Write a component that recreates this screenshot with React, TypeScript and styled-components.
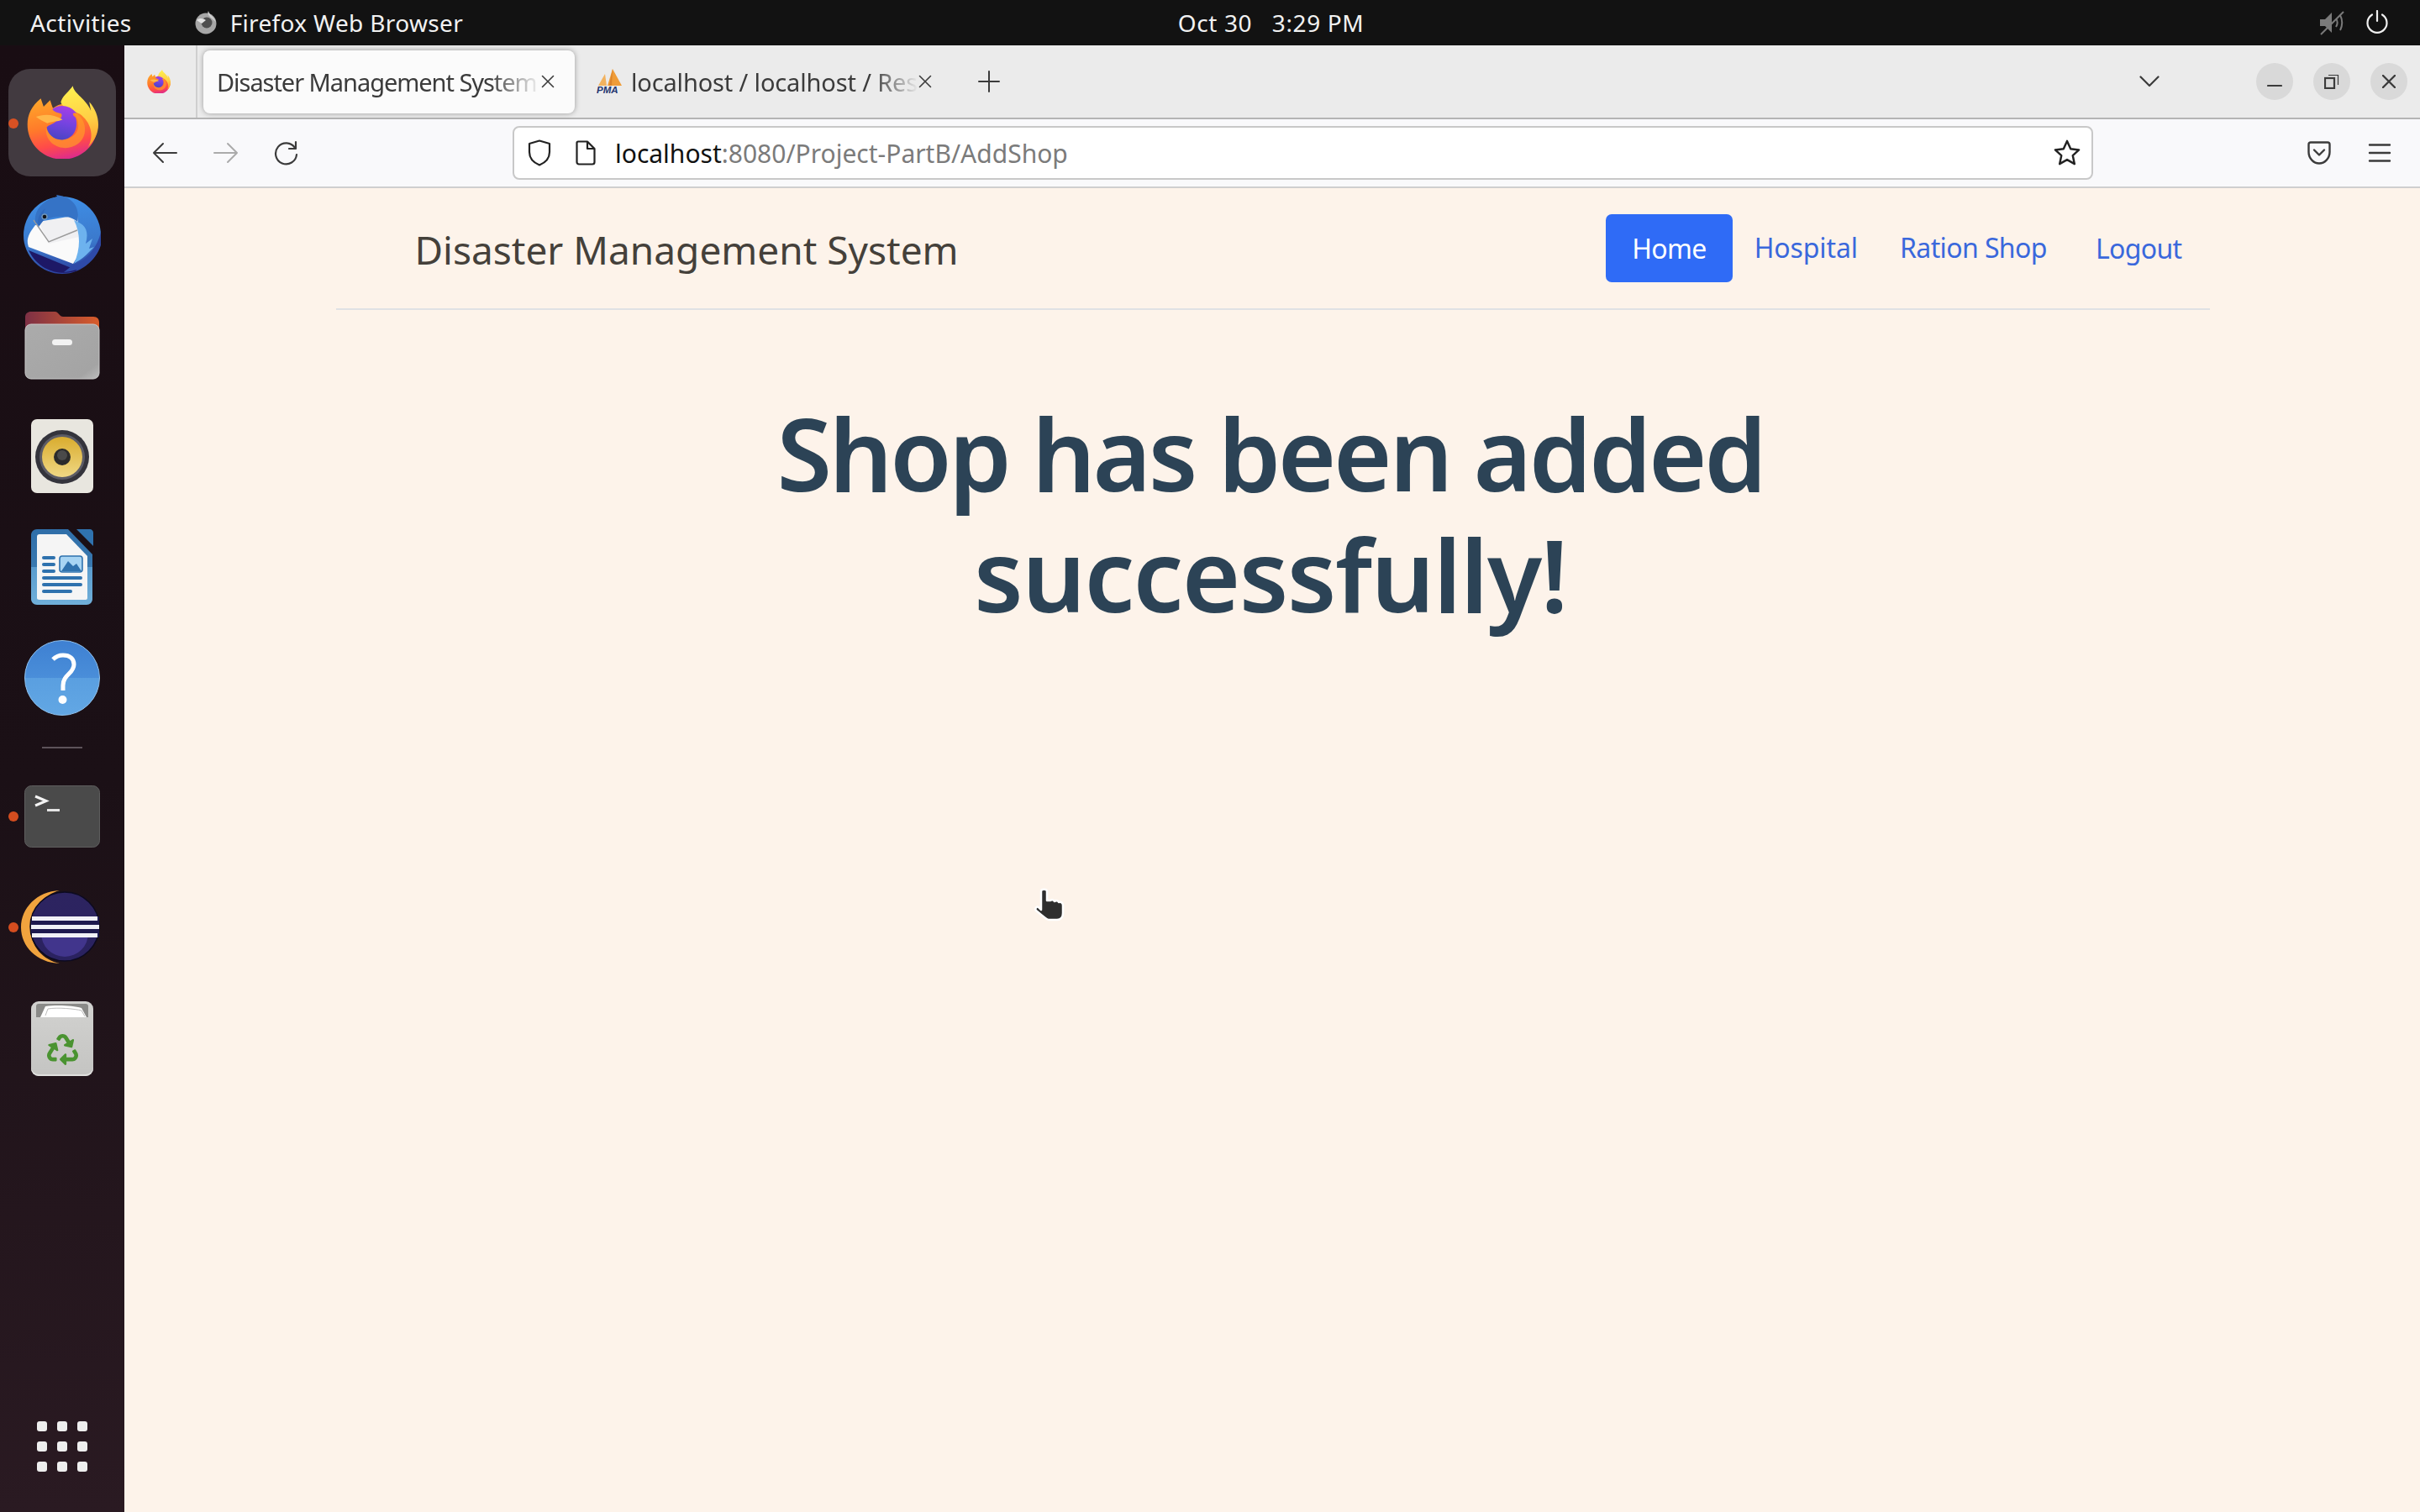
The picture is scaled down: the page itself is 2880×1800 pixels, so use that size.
import React from "react";
import styled, { createGlobalStyle } from "styled-components";
import { FaRecycle } from "react-icons/fa";

const Global = createGlobalStyle`
  html, body { margin: 0; padding: 0; width: 2880px; height: 1800px; overflow: hidden; background: #121212; }
  #root { width: 2880px; height: 1800px; }
  * { box-sizing: border-box; }
`;
const UI = `"Noto Sans", "Open Sans", sans-serif`;

const Screen = styled.div`
  position: relative; width: 2880px; height: 1800px; display: flex; flex-direction: column;
  font-family: ${UI}; overflow: hidden;
`;
const TopBar = styled.header`
  height: 54px; flex: none; background: #121212; color: #f2f2f2; display: grid;
  grid-template-columns: 1fr auto 1fr; align-items: center; padding: 0 37px 0 36px; font-size: 28px;
`;
const TopLeft = styled.div`display: flex; align-items: center;`;
const TopRight = styled.div`display: flex; align-items: center; justify-content: flex-end; gap: 25px;`;
const Activities = styled.span`letter-spacing: 0.4px; margin-right: 74px;`;
const AppName = styled.span`letter-spacing: 0.35px; margin-left: 15px;`;
const Clock = styled.span`letter-spacing: 0.6px; white-space: pre; transform: translateX(73px);`;
const Desktop = styled.div`flex: 1; display: flex; min-height: 0;`;
const Dock = styled.nav`
  width: 148px; flex: none; display: flex; flex-direction: column; align-items: center;
  background: linear-gradient(180deg, #190d13 0%, #1b1016 50%, #2a1a22 100%); padding-top: 27px;
`;
const Slot = styled.div<{ $active?: boolean }>`
  position: relative; width: 128px; height: 132px; flex: none; display: flex; align-items: center; justify-content: center;
  ${p => p.$active ? `&::before{content:"";position:absolute;left:0;right:0;top:1px;bottom:3px;background:#423a40;border-radius:26px;} & > svg{margin-top:-3px;}` : ""}
  & > svg { position: relative; }
`;
const RunDot = styled.span`
  position: absolute; left: 0px; top: 60px; width: 12px; height: 12px; border-radius: 50%; background: #e95420;
  opacity: .9;
`;
const DockSep = styled.div`
  width: 48px; height: 2px; background: #5d535a; margin: 16px 0 15px; flex: none;
`;
const AppGrid = styled.div`
  margin-top: auto; margin-bottom: 48px; display: grid; grid-template-columns: repeat(3, 12px); gap: 12px;
`;
const GridDot = styled.span`width: 12px; height: 12px; border-radius: 3px; background: #eeeeee;`;
const TrashTile = styled.div`
  position: relative; width: 74px; height: 89px; border-radius: 9px; overflow: hidden; display: flex; align-items: center; justify-content: center; padding-top: 26px;
  background: linear-gradient(180deg, #d2d2d0, #c4c4c2); color: #4a9331; box-shadow: inset 0 -2px 0 #e0e0de;
`;
const TrashMouth = styled.svg`position: absolute; left: 0; top: 0;`;

const Browser = styled.main`flex: 1; display: flex; flex-direction: column; min-width: 0;`;
const TabStrip = styled.div`
  height: 88px; flex: none; background: #ebebeb; border-bottom: 2px solid #b4b4b4; display: flex; align-items: center; color: #3b3b3b;
`;
const PinnedTab = styled.div`
  width: 87px; height: 100%; flex: none; display: flex; align-items: center; justify-content: center; border-right: 2px solid #cfcfcf;
  padding-right: 3px;
`;
const Tab = styled.div<{ $active?: boolean }>`
  width: 442px; height: 75px; flex: none; display: flex; align-items: center; margin-left: 7px; padding: 0 24px 0 ${p => p.$active ? 16 : 19}px; font-size: 29px; border-radius: 8px;
  ${p => p.$active ? `background:#fbfbfb; box-shadow: 0 0 6px rgba(0,0,0,.35);` : ""}
`;
const TabTitle = styled.span<{ $ls: number }>`
  flex: 1; min-width: 0; white-space: nowrap; overflow: hidden; letter-spacing: ${p => p.$ls}px;
  -webkit-mask-image: linear-gradient(90deg, #000 84%, transparent 100%); mask-image: linear-gradient(90deg, #000 84%, transparent 100%);
`;
const TabIconGap = styled.span`width: 9px; flex: none;`;
const NewTab = styled.div`margin-left: 31px; display: flex;`;
const StripEnd = styled.div`margin-left: auto; display: flex; align-items: center; padding-right: 15px;`;
const AllTabs = styled.div`display: flex; margin-right: 91px;`;
const WinButton = styled.div`
  width: 44px; height: 44px; border-radius: 50%; background: #d9d9d9; display: flex; align-items: center; justify-content: center; margin-left: 24px;
`;
const NavBar = styled.div`
  height: 82px; flex: none; background: #f9f9fb; border-bottom: 2px solid #cfcfcf; display: flex; align-items: center; padding-left: 33px;
`;
const NavIcon = styled.div<{ $w: number }>`width: ${p => p.$w}px; flex: none; display: flex;`;
const UrlBar = styled.div`
  width: 1881px; height: 64px; flex: none; background: #fff; border: 2px solid #c8c8c8; border-radius: 8px; display: flex; align-items: center;
  padding: 0 13px 0 16px; font-size: 30px; color: #7b7b7b; letter-spacing: 0;
`;
const UrlHost = styled.span`color: #111;`;
const UrlText = styled.span`margin-left: 23px; flex: 1;`;
const PageIcon = styled.span`display: flex; margin-left: 29px;`;
const NavEnd = styled.div`display: flex; align-items: center; margin-left: 255px; gap: 44px;`;

const Page = styled.section`flex: 1; background: #fdf3ea; display: flex; flex-direction: column; align-items: center; min-height: 0; padding-left: 1px;`;
const SiteHeader = styled.div`
  width: 2230px; height: 145px; flex: none; display: flex; align-items: center; justify-content: space-between; border-bottom: 2px solid #e0e1e4; padding: 0 33px 0 94px;
`;
const Brand = styled.span`font-size: 46px; color: #44403a; letter-spacing: 0; line-height: 1; padding-top: 2px;`;
const Links = styled.div`display: flex; align-items: center;`;
const NavLink = styled.a<{ $active?: boolean; $gap: number; $ls: number; $lift?: boolean }>`
  height: 81px; display: flex; align-items: center; border-radius: 7px; font-size: 32px; letter-spacing: ${p => p.$ls}px; margin-left: ${p => p.$gap}px;
  padding: 0 ${p => p.$active ? 31 : 0}px ${p => p.$lift ? 3 : 0}px;
  background: ${p => p.$active ? "#2f6bf6" : "transparent"}; color: ${p => p.$active ? "#fff" : "#3a68dc"};
`;
const Heading = styled.h1`
  margin: 98px 0 0; width: 1400px; padding-right: 5px; text-align: center; font-size: 119px; line-height: 144px; font-weight: 600; color: #2c4356;
`;
const HeadLine = styled.span<{ $ls: number }>`display: block; letter-spacing: ${p => p.$ls}px;`;
const Pointer = styled.svg`position: absolute; left: 1229px; top: 1057px;`;

const Firefox = ({ size }: { size: number }) => (
  <svg width={size} height={size * 260 / 252} viewBox="36 33 252 260">
    <defs>
      <linearGradient id="ffBody" x1=".3" y1="0" x2=".55" y2="1">
        <stop offset="0" stopColor="#ffa52a" /><stop offset=".45" stopColor="#ff7a2a" />
        <stop offset=".75" stopColor="#ff4a4a" /><stop offset="1" stopColor="#dd2a8e" />
      </linearGradient>
      <linearGradient id="ffFlame" x1=".5" y1="0" x2=".6" y2="1">
        <stop offset="0" stopColor="#fff04f" /><stop offset=".55" stopColor="#ffcf45" /><stop offset="1" stopColor="#ff9a2a" />
      </linearGradient>
      <linearGradient id="ffBall" x1=".6" y1="0" x2=".4" y2="1">
        <stop offset="0" stopColor="#a63fe6" /><stop offset=".5" stopColor="#7543e0" /><stop offset="1" stopColor="#4a44c4" />
      </linearGradient>
    </defs>
    <path fill="url(#ffBody)" d="M38 170C38 135 52 105 85 78L95 107L118 84C122 95 124 104 128 112C150 96 178 90 200 110C240 130 286 130 286 170C286 238 232 293 162 293C92 293 38 238 38 170Z" />
    <path fill="url(#ffFlame)" d="M198 34C202 62 246 80 262 122L256 90C276 112 288 140 288 170C288 200 276 226 250 252C276 212 262 160 222 132C194 120 146 104 158 84C166 66 186 52 198 34Z" />
    <path fill="#ff9a2a" opacity=".7" d="M196 122C226 136 246 164 240 200C234 236 196 258 160 252C126 246 100 220 104 182C118 220 174 236 206 204C226 184 218 146 196 122Z" />
    <path fill="url(#ffBall)" d="M160 104C178 104 196 112 212 130C196 128 194 134 208 146C220 182 200 222 162 224C132 226 108 204 106 180C112 170 134 168 146 152C160 146 160 140 158 132C140 128 128 122 126 116C136 108 148 104 160 104Z" />
    <path fill="#ffb84a" d="M68 143C92 133 126 131 162 152C150 160 122 158 108 166C94 160 80 152 68 143Z" />
  </svg>
);

const Thunderbird = () => (
  <svg width="96" height="94" viewBox="0 0 96 94">
    <defs>
      <linearGradient id="tbBlue" x1=".5" y1="0" x2=".6" y2="1"><stop offset="0" stopColor="#3f8fe6" /><stop offset=".6" stopColor="#3b79cc" /><stop offset="1" stopColor="#2b3f9e" /></linearGradient>
    </defs>
    <circle cx="48" cy="48" r="46" fill="url(#tbBlue)" />
    <path fill="#1d1866" d="M8 66L66 90C50 96 22 94 8 66Z" />
    <path fill="#2e4aa8" d="M60 84C78 78 90 62 94 44L94 60C88 78 74 90 50 92Z" />
    <path fill="#fafafa" d="M16 36L62 36L68 36C72 42 70 60 66 74L61 82L8 62C4 52 10 44 16 36Z" />
    <path fill="#f0f0f2" d="M20 32L66 24L68 50L32 58Z" />
    <path fill="none" stroke="#9a9a9a" strokeWidth="1.4" d="M14 30L32 56L66 42" />
    <path fill="#3573c6" d="M16 32C14 18 26 6 42 2L41 0C58 2 70 12 66 32C58 24 42 24 26 30L20 36Z" />
    <path fill="#6db2ee" d="M66 32C76 36 80 44 76 58L84 52L80 64L86 62L76 72C70 78 64 80 62 82C70 64 70 46 62 30Z" />
    <path fill="#2f69bd" d="M20 38C18 34 18 24 28 16C24 24 24 28 26 30Z" />
    <circle cx="27" cy="26" r="2.2" fill="#141414" /><circle cx="27" cy="26" r="3.2" fill="none" stroke="#8da3ad" strokeWidth="1" />
  </svg>
);

const Files = () => (
  <svg width="90" height="82" viewBox="0 0 90 82">
    <defs>
      <linearGradient id="fTab" x1="0" y1="0" x2="1" y2="0"><stop offset="0" stopColor="#7d3045" /><stop offset="1" stopColor="#d95d2b" /></linearGradient>
      <linearGradient id="fBody" x1="0" y1="0" x2="1" y2="1"><stop offset="0" stopColor="#ababab" /><stop offset=".85" stopColor="#a4a4a4" /><stop offset="1" stopColor="#bdbdbd" /></linearGradient>
    </defs>
    <path fill="url(#fTab)" d="M1 30V8C1 3 4 1 8 1H36C39 1 40 3 42 5C44 7 45 7 48 7H82C87 7 89 10 89 14V30Z" />
    <rect x="1" y="16" width="88" height="65" rx="7" fill="url(#fBody)" stroke="#c9c9c9" strokeWidth="1" />
    <rect x="33" y="34" width="24" height="7" rx="3.5" fill="#f2f2f2" />
  </svg>
);

const Rhythmbox = () => (
  <svg width="74" height="88" viewBox="0 0 74 88">
    <defs><linearGradient id="rbCone" x1="0" y1="0" x2="0" y2="1"><stop offset="0" stopColor="#d9ac2e" /><stop offset="1" stopColor="#f0d884" /></linearGradient></defs>
    <rect x="0" y="0" width="74" height="88" rx="7" fill="#e8e6df" />
    <circle cx="37" cy="45" r="32" fill="#34343c" /><circle cx="37" cy="45" r="27" fill="#5c5c66" />
    <circle cx="37" cy="45" r="24" fill="url(#rbCone)" /><circle cx="37" cy="45" r="10" fill="#2b2b2b" /><circle cx="37" cy="43" r="6" fill="#4a4a4a" />
  </svg>
);

const Writer = () => (
  <svg width="74" height="90" viewBox="0 0 74 90">
    <defs><linearGradient id="wSide" x1="0" y1="0" x2="0" y2="1"><stop offset="0" stopColor="#2f6ea8" /><stop offset=".5" stopColor="#3979b0" /><stop offset=".5" stopColor="#5a9cce" /><stop offset="1" stopColor="#70afd9" /></linearGradient></defs>
    <path fill="url(#wSide)" d="M7 0H44L73 30V83C73 87 70 90 66 90H7C3 90 0 87 0 83V7C0 3 3 0 7 0Z" />
    <path fill="#f5f5f5" d="M10 6H42L67 32V82C67 83 66 84 65 84H10C8 84 7 83 7 82V9C7 7 8 6 10 6Z" />
    <path fill="#2f72ae" d="M54 0H70C72 0 74 2 74 4V20Z" />
    <g fill="#2f72ae">
      <rect x="13" y="32" width="16" height="4" rx="2" /><rect x="13" y="40" width="16" height="4" rx="2" /><rect x="13" y="48" width="16" height="4" rx="2" />
      <rect x="13" y="56" width="48" height="4" rx="2" /><rect x="13" y="64" width="48" height="4" rx="2" /><rect x="13" y="72" width="36" height="4" rx="2" />
    </g>
    <rect x="34" y="32" width="27" height="19" rx="3" fill="#a7d4f3" stroke="#2f72ae" strokeWidth="1.6" />
    <path fill="#2f72ae" d="M36 50L44 38L50 44L54 41L60 50Z" />
  </svg>
);

const Help = () => (
  <svg width="90" height="90" viewBox="0 0 90 90">
    <defs><linearGradient id="hBlue" x1="0" y1="0" x2="0" y2="1"><stop offset="0" stopColor="#3e80d2" /><stop offset=".5" stopColor="#4a8ed9" /><stop offset=".5" stopColor="#5a9fe0" /><stop offset="1" stopColor="#62a7e4" /></linearGradient></defs>
    <circle cx="45" cy="45" r="44.5" fill="url(#hBlue)" stroke="#8fc0ec" strokeWidth="1" />
    <path fill="none" stroke="#fff" strokeWidth="5" d="M34 23C38 19 42 18 46 18C54 18 59 22 59 29C59 40 46 41 46 54V60" />
    <circle cx="45.5" cy="71" r="5" fill="#fff" />
  </svg>
);

const Terminal = () => (
  <svg width="90" height="74" viewBox="0 0 90 74">
    <rect x=".5" y=".5" width="89" height="73" rx="8" fill="#4a4a4a" stroke="#5e5e5e" />
    <path fill="none" stroke="#f4f4f4" strokeWidth="3" d="M13 13L26 18.5L13 24" />
    <rect x="27" y="28" width="15" height="3" fill="#e4e4e4" />
  </svg>
);

const Eclipse = () => (
  <svg width="100" height="90" viewBox="0 0 100 90">
    <defs><linearGradient id="eBall" x1="0" y1="0" x2="0" y2="1"><stop offset="0" stopColor="#2d2460" /><stop offset="1" stopColor="#2a2260" /></linearGradient></defs>
    <path fill="#f0a33e" d="M47 1C20 2 1 22 1 45C1 68 20 87 47 88C28 84 12 68 12 45C12 24 28 6 47 1Z" />
    <circle cx="53" cy="44" r="41" fill="url(#eBall)" stroke="#0c0a20" strokeWidth="1.5" />
    <path fill="#41358c" d="M25 52A28 28 0 0 0 81 52Z" />
    <rect x="14" y="32" width="80" height="25" fill="#1e194e" />
    <rect x="14" y="32" width="78" height="5" fill="#f0f0f6" /><rect x="13" y="42" width="81" height="5" fill="#f0f0f6" /><rect x="14" y="52" width="78" height="5" fill="#f0f0f6" />
  </svg>
);

const Trash = () => (
  <TrashTile>
    <TrashMouth width="74" height="22" viewBox="0 0 74 22">
      <path fill="#8a8a88" d="M9 3H65C67 3 68 4 68 6V19H6V6C6 4 7 3 9 3Z" />
      <path fill="#fff" d="M11 19L17 6C30 4 50 5 60 8L66 19Z" />
      <path fill="none" stroke="#bcbcbc" strokeWidth="1" d="M17 17L20 9C32 7 52 9 60 11L64 18" />
    </TrashMouth>
    <FaRecycle size={37} />
  </TrashTile>
);

const Stroke = ({ w = 24, h = 24, vb, sw = 2, color = "#3b3b3b", d }: { w?: number; h?: number; vb: string; sw?: number; color?: string; d: string }) => (
  <svg width={w} height={h} viewBox={vb} fill="none" stroke={color} strokeWidth={sw} strokeLinecap="round" strokeLinejoin="round"><path d={d} /></svg>
);

export default function App() {
  return (
    <Screen>
      <Global />
      <TopBar>
        <TopLeft>
          <Activities>Activities</Activities>
          <svg width="28" height="28" viewBox="0 0 28 28">
            <circle cx="14" cy="15" r="12.5" fill="#a7a7a7" /><path fill="#cfcfcf" d="M17 0C18 5 24 6 26 14C22 8 14 6 17 0Z" />
            <circle cx="15" cy="14" r="6.5" fill="#4f4f4f" /><path fill="#e4e4e4" d="M3 11C7 8 11 9 14 11L9 15Z" />
          </svg>
          <AppName>Firefox Web Browser</AppName>
        </TopLeft>
        <Clock>Oct 30   3:29 PM</Clock>
        <TopRight>
          <svg width="30" height="30" viewBox="0 0 30 30">
            <path fill="#7a7a7a" d="M1 11H7L15 3V27L7 19H1Z" />
            <path fill="none" stroke="#7a7a7a" strokeWidth="2" d="M2 29L29 2M20 10C22 13 22 17 20 20M25 6C28 12 28 18 25 24" />
          </svg>
          <svg width="28" height="30" viewBox="0 0 28 30" fill="none" stroke="#efefef" strokeWidth="2.2" strokeLinecap="round">
            <path d="M14 1V13" /><path d="M8 5.5A11.5 11.5 0 1 0 20 5.5" />
          </svg>
        </TopRight>
      </TopBar>
      <Desktop>
        <Dock>
          <Slot $active><RunDot /><Firefox size={85} /></Slot>
          <Slot><Thunderbird /></Slot>
          <Slot><Files /></Slot>
          <Slot><Rhythmbox /></Slot>
          <Slot><Writer /></Slot>
          <Slot><Help /></Slot>
          <DockSep />
          <Slot><RunDot /><Terminal /></Slot>
          <Slot><RunDot /><Eclipse /></Slot>
          <Slot><Trash /></Slot>
          <AppGrid>{Array.from({ length: 9 }, (_, i) => <GridDot key={i} />)}</AppGrid>
        </Dock>
        <Browser>
          <TabStrip>
            <PinnedTab><Firefox size={28} /></PinnedTab>
            <Tab $active>
              <TabTitle $ls={-1.05}>Disaster Management System</TabTitle>
              <Stroke w={16} h={16} vb="0 0 16 16" d="M1.5 1.5L14.5 14.5M14.5 1.5L1.5 14.5" sw={1.6} />
            </Tab>
            <Tab>
              <svg width="32" height="30" viewBox="0 0 32 30">
                <path fill="#f2b25e" d="M2 20L10 6L12 20Z" /><path fill="#ef9c38" d="M13 20L19 0L30 20Z" /><path fill="#d9822b" d="M19 0L18 20H15Z" />
                <text x="0" y="29" fontSize="11.5" fontStyle="italic" fontWeight="700" fontFamily="Liberation Sans" fill="#23346e">PMA</text>
              </svg>
              <TabIconGap />
              <TabTitle $ls={-0.15}>localhost / localhost / Resources</TabTitle>
              <Stroke w={16} h={16} vb="0 0 16 16" d="M1.5 1.5L14.5 14.5M14.5 1.5L1.5 14.5" sw={1.6} />
            </Tab>
            <NewTab><Stroke w={26} h={26} vb="0 0 26 26" d="M13 1V25M1 13H25" sw={2} /></NewTab>
            <StripEnd>
              <AllTabs><Stroke w={24} h={14} vb="0 0 24 14" d="M1.5 1.5L12 12L22.5 1.5" sw={2.2} /></AllTabs>
              <WinButton><Stroke w={18} h={18} vb="0 0 18 18" d="M1 14H17" sw={2.2} /></WinButton>
              <WinButton>
                <svg width="18" height="18" viewBox="0 0 18 18" fill="none" stroke="#3b3b3b"><rect x="1" y="5" width="11" height="12" strokeWidth="2.2" /><path d="M5 1.5H16.5V13" strokeWidth="1.2" /></svg>
              </WinButton>
              <WinButton><Stroke w={16} h={16} vb="0 0 16 16" d="M1 1L15 15M15 1L1 15" sw={2.4} /></WinButton>
            </StripEnd>
          </TabStrip>
          <NavBar>
            <NavIcon $w={73}><Stroke w={30} h={26} vb="0 0 30 26" d="M29 13H2M13 2L2 13L13 24" sw={2} /></NavIcon>
            <NavIcon $w={72}><Stroke w={30} h={26} vb="0 0 30 26" d="M1 13H28M17 2L28 13L17 24" sw={2} color="#ababab" /></NavIcon>
            <NavIcon $w={284}><Stroke w={30} h={30} vb="0 0 30 30" d="M25 9A12.5 12.5 0 1 0 27 17M26 2V10H18" sw={2.2} /></NavIcon>
            <UrlBar>
              <Stroke w={28} h={32} vb="0 0 28 32" d="M14 1.5L26 5V15C26 23 20 28 14 30.5C8 28 2 23 2 15V5Z" sw={2.2} color="#222" />
              <PageIcon><Stroke w={24} h={30} vb="0 0 24 30" d="M3 1.5H14L22.5 10V26C22.5 27.5 21.5 28.5 20 28.5H4C2.5 28.5 1.5 27.5 1.5 26V3C1.5 2 2 1.5 3 1.5ZM14 1.5V10H22.5" sw={2.2} color="#222" /></PageIcon>
              <UrlText><UrlHost>localhost</UrlHost>:8080/Project-PartB/AddShop</UrlText>
              <Stroke w={32} h={32} vb="0 0 34 34" d="M17 2L21.5 12L32 13.2L24.2 20.4L26.4 31L17 25.6L7.6 31L9.8 20.4L2 13.2L12.5 12Z" sw={2.6} color="#222" />
            </UrlBar>
            <NavEnd>
              <Stroke w={28} h={28} vb="0 0 28 28" d="M4 1.5H24C25.5 1.5 26.5 2.5 26.5 4V13C26.5 20.5 20.5 26.5 14 26.5C7.5 26.5 1.5 20.5 1.5 13V4C1.5 2.5 2.5 1.5 4 1.5ZM8 10.5L14 16.5L20 10.5" sw={2.4} />
              <Stroke w={28} h={24} vb="0 0 28 24" d="M2 2.5H26M2 12H26M2 21.5H26" sw={2.4} />
            </NavEnd>
          </NavBar>
          <Page>
            <SiteHeader>
              <Brand>Disaster Management System</Brand>
              <Links>
                <NavLink $active $gap={0} $ls={-0.65}>Home</NavLink>
                <NavLink $gap={26} $ls={-0.1} $lift>Hospital</NavLink>
                <NavLink $gap={50} $ls={-0.6} $lift>Ration Shop</NavLink>
                <NavLink $gap={58} $ls={-0.65}>Logout</NavLink>
              </Links>
            </SiteHeader>
            <Heading>
              <HeadLine $ls={-3.35}>Shop has been added</HeadLine>
              <HeadLine $ls={-1.6}>successfully!</HeadLine>
            </Heading>
          </Page>
        </Browser>
      </Desktop>
      <Pointer width="40" height="42" viewBox="0 0 40 42">
        <path fill="#2e2e2e" stroke="#fff" strokeWidth="2.5" strokeLinejoin="round" d="M10 4C10 1 17 1 17 4V15L21 15C23 13.5 25 14.5 26 16C28 14.5 30 15 31 17C34 16 36 18 36 21V30C36 35 33 38 29 38H19C17 38 14 35 4 27C2 24.5 5 21.5 7 23L10 26Z" />
      </Pointer>
    </Screen>
  );
}
